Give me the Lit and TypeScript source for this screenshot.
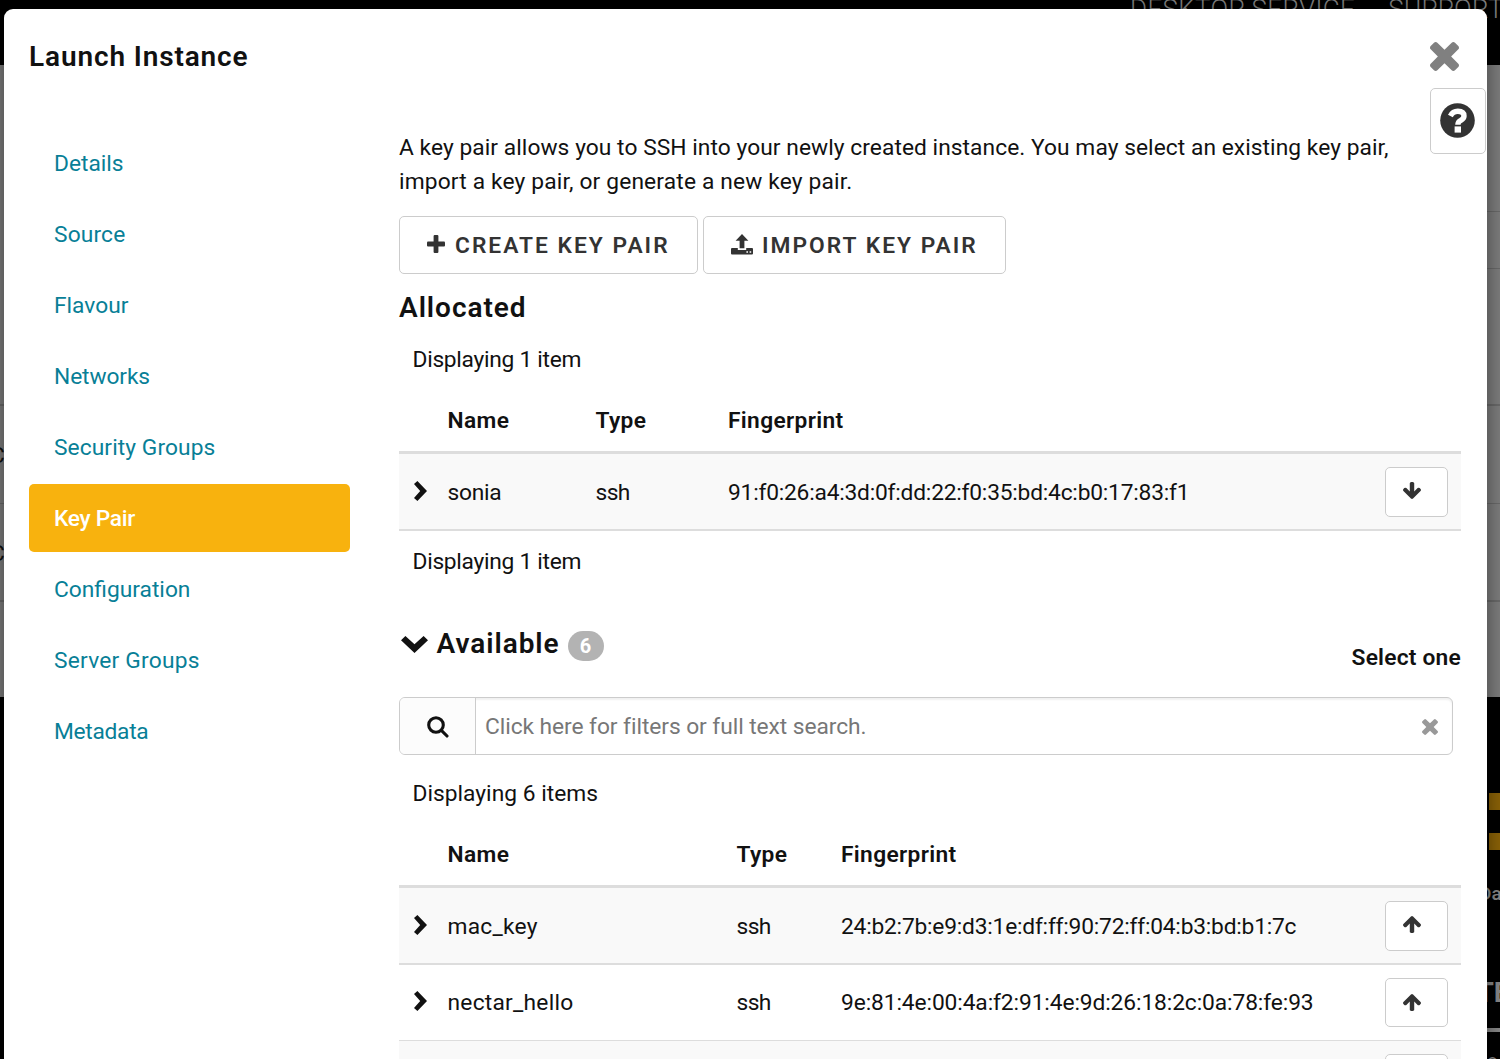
import { LitElement, html, svg, css, nothing } from "lit";
import { customElement, property } from "lit/decorators.js";
import { classMap } from "lit/directives/class-map.js";

const TIMES =
  "M1490 1322q0 40-28 68l-136 136q-28 28-68 28t-68-28l-294-294-294 294q-28 28-68 28t-68-28l-136-136q-28-28-28-68t28-68l294-294-294-294q-28-28-28-68t28-68l136-136q28-28 68-28t68 28l294 294 294-294q28-28 68-28t68 28l136 136q28 28 28 68t-28 68l-294 294 294 294q28 28 28 68z";
const ARROW =
  "M1675 971q0 51-37 90l-75 75q-38 38-91 38-54 0-90-38l-294-293v704q0 52-37.5 84.5t-90.5 32.5h-128q-53 0-90.5-32.5t-37.5-84.5v-704l-294 293q-36 38-90 38t-90-38l-75-75q-38-38-38-90 0-53 38-91l651-651q35-37 90-37 54 0 91 37l651 651q37 39 37 91z";

const ICONS: Record<string, { box: string; body: unknown }> = {
  times: { box: "302 366 1188 1188", body: svg`<path d=${TIMES} />` },
  up: { box: "117 192 1558 1472", body: svg`<path d=${ARROW} />` },
  down: {
    box: "117 192 1558 1472",
    body: svg`<path transform="rotate(180 896 928)" d=${ARROW} />`,
  },
  plus: {
    box: "0 0 18 18",
    body: svg`<rect x="0" y="6.6" width="18" height="4.8" rx="1" /><rect x="6.6" y="0" width="4.8" height="18" rx="1" />`,
  },
  upload: {
    box: "0 0 22 21",
    body: svg`<path d="M11 0l6.4 6.8h-4v7.4H8.6V6.8h-4z" /><path fill-rule="evenodd" d="M1 14h5.8v1.9h8.4V14H21q1 0 1 1v4.4q0 1-1 1H1q-1 0-1-1V15q0-1 1-1zM15.4 17.2v1.6H17v-1.6zM18.6 17.2v1.6h1.6v-1.6z" />`,
  },
  right: {
    box: "0 0 13 20",
    body: svg`<path d="M3.4 0L13 10 3.4 20 0 16.9 6.2 10 0 3.1z" />`,
  },
  chevron: {
    box: "0 0 27 17",
    body: svg`<path d="M0 4.2L4.4 0 13.5 8.2 22.6 0 27 4.2 13.5 17z" />`,
  },
  search: {
    box: "0 0 22 22",
    body: svg`<g fill="none" stroke="currentColor" stroke-width="3.1"><circle cx="9" cy="9" r="7.3" /><path stroke-linecap="round" d="M14.6 14.6L20 20" /></g>`,
  },
  help: {
    box: "0 0 35 35",
    body: svg`<circle cx="17.5" cy="17.5" r="17.3" /><path fill="none" stroke="#fff" stroke-width="5.4" d="M10.4 12.9Q12.8 8.2 17.8 8.2 24 8.2 24 13 24 15.6 20.8 17.4 17.9 18.9 17.9 21.8" /><path fill="#fff" d="M14.6 23.4h6.4v6.2h-6.4z" />`,
  },
};

@customElement("ui-icon")
class UiIcon extends LitElement {
  @property() name = "";
  static styles = css`
    :host { display: block; flex: none; }
    svg { display: block; width: 100%; height: 100%; fill: currentColor; }
  `;
  render() {
    const i = ICONS[this.name];
    return i
      ? html`<svg viewBox=${i.box} preserveAspectRatio="none" aria-hidden="true">${i.body}</svg>`
      : nothing;
  }
}

interface Key { name: string; type: string; fingerprint: string; }

@customElement("key-table")
class KeyTable extends LitElement {
  @property({ type: Array }) rows: Key[] = [];
  @property() direction = "up";
  @property() kind = "allocated";
  static styles = css`
    :host { display: block; }
    .line { display: grid; align-items: center; }
    .allocated .line { grid-template-columns: 48.5px 148px 132.5px 1fr 76px; }
    .available .line { grid-template-columns: 48.5px 289px 104.5px 1fr 76px; }
    .head { height: 60px; padding-top: 2px; border-bottom: 3px solid #ddd; font-weight: 600; letter-spacing: 0.35px; }
    .row { height: 75px; border-bottom: 1px solid #ddd; }
    .row.first { border-bottom-width: 2px; }
    .row.later { height: 74px; padding-bottom: 1px; }
    .odd { background: #f9f9f9; }
    .expander { width: 13px; height: 20px; margin: 0 0 2px 14.5px; color: #111; }
    .name, .type { padding-top: 2px; }
    .name { letter-spacing: 0.25px; }
    .tight .name { letter-spacing: -0.24px; }
    .type { letter-spacing: -0.6px; }
    .fp { padding-top: 2px; white-space: nowrap; letter-spacing: -0.21px; }
    .fp.wide { letter-spacing: -0.1px; }
    .move {
      box-sizing: border-box; width: 63px; height: 50px; padding: 0 9px 2px 0;
      border: 1px solid #ccc; border-radius: 5px; background: #fff; color: #333;
      display: flex; align-items: center; justify-content: center;
    }
    .later .move { height: 49px; align-self: start; margin-top: 13px; padding-bottom: 1px; }
    .arrow { width: 18px; height: 17px; }
  `;
  render() {
    return html`<div class=${this.kind}>
      <div class="line head"><span></span><span>Name</span><span>Type</span><span>Fingerprint</span><span></span></div>
      ${this.rows.map(
        (k, i) => html`<div class=${classMap({ line: true, row: true, first: i === 0, later: i > 0, odd: i % 2 === 0, tight: k.name.length < 6 })}>
          <ui-icon class="expander" name="right"></ui-icon>
          <span class="name">${k.name}</span>
          <span class="type">${k.type}</span>
          <span class=${classMap({ fp: true, wide: i === 1 })}>${k.fingerprint}</span>
          <span class="move"><ui-icon class="arrow" name=${this.direction}></ui-icon></span>
        </div>`
      )}
    </div>`;
  }
}

const STEPS = ["Details", "Source", "Flavour", "Networks", "Security Groups", "Key Pair", "Configuration", "Server Groups", "Metadata"];
const ALLOCATED: Key[] = [
  { name: "sonia", type: "ssh", fingerprint: "91:f0:26:a4:3d:0f:dd:22:f0:35:bd:4c:b0:17:83:f1" },
];
const AVAILABLE: Key[] = [
  { name: "mac_key", type: "ssh", fingerprint: "24:b2:7b:e9:d3:1e:df:ff:90:72:ff:04:b3:bd:b1:7c" },
  { name: "nectar_hello", type: "ssh", fingerprint: "9e:81:4e:00:4a:f2:91:4e:9d:26:18:2c:0a:78:fe:93" },
  { name: "", type: "", fingerprint: "" },
];

@customElement("app-root")
class AppRoot extends LitElement {
  static styles = css`
    :host {
      display: block; position: relative; width: 1500px; height: 1059px; overflow: hidden;
      background: #000; color: #111; font: 400 22.75px/34px Roboto, "Liberation Sans", sans-serif;
    }
    .page { display: flex; flex-direction: column; height: 100%; }
    .top {
      height: 65px; flex: none; display: flex; gap: 33px; padding-left: 1130px; box-sizing: border-box;
      color: #808080; font-size: 26px; line-height: 17px; font-weight: 300; letter-spacing: 0.35px; white-space: nowrap;
    }
    .top span { padding-top: 1px; }
    .body { flex: none; height: 632px; background: #7f7f7f; display: flex; flex-direction: column; }
    .band { box-sizing: border-box; border-bottom: 1px solid #6b6b6b; line-height: 99px; color: #111; text-indent: -10px; }
    .b1 { height: 147px; margin-left: 100px; }
    .b2 { height: 57px; margin-left: 100px; }
    .b3 { height: 137px; border-bottom-width: 2px; }
    .b4 { height: 98px; }
    .b5 { height: 98px; border-bottom-width: 2px; }
    .foot { flex: 1; box-sizing: border-box; padding: 96px 0 0 1489px; overflow: hidden; white-space: nowrap; color: #8a8a8a; }
    .bar { height: 17px; margin-bottom: 22.5px; background: #8c6307; }
    .small { font-size: 19px; line-height: 24px; margin: 32px 0 0 -10px; font-weight: 500; }
    .big { font-size: 28px; line-height: 34px; font-weight: 700; margin: 70px 0 0 -12.5px; }
    .rule { height: 4px; margin: 18px 0 0 -5px; background: #8a8a8a; }
    .tail { font-size: 19px; line-height: 20px; margin: 19px 0 0 -2px; }

    .modal {
      position: absolute; left: 4px; top: 9px; width: 1483px; height: 1100px; box-sizing: border-box;
      background: #fff; border-radius: 9px; box-shadow: 0 5px 22px rgba(0, 0, 0, 0.5);
    }
    .titlebar { display: flex; justify-content: space-between; height: 79px; padding: 0 28px 0 25px; }
    h1, h2 { margin: 0; font-weight: 600; font-size: 28px; }
    h1 { padding-top: 31px; letter-spacing: 0.87px; }
    .close { width: 29px; height: 29px; margin-top: 32.5px; color: #808080; }
    .help {
      position: absolute; left: 1426px; top: 79px; width: 56px; height: 66px; box-sizing: border-box;
      border: 1px solid #ccc; border-radius: 5px; background: #fff; color: #333;
      display: flex; justify-content: center; padding: 14px 1px 0 0;
    }
    .helpicon { width: 35px; height: 35px; }
    .content { display: flex; gap: 49px; padding: 32px 0 0 25px; }
    nav { width: 321px; flex: none; padding-top: 9px; display: flex; flex-direction: column; gap: 3px; }
    .step { height: 68px; line-height: 69px; padding-left: 25px; border-radius: 5px; color: #087f97; letter-spacing: 0; }
    .step.active { background: #f8b20e; color: #fff; font-weight: 500; letter-spacing: -0.3px; }
    .step.s1 { letter-spacing: 0.15px; }
    .step.s3 { letter-spacing: -0.1px; }
    .step.s8 { letter-spacing: -0.3px; }
    .step.s4 { letter-spacing: 0.08px; }
    .step.s7 { letter-spacing: 0.22px; }
    .main { width: 1062px; padding-top: 11px; }
    .intro { margin: 0; letter-spacing: 0.06px; }
    .intro span { display: block; white-space: nowrap; }
    .intro .l2 { letter-spacing: 0.16px; }
    .actions { display: flex; gap: 5px; margin-top: 17px; }
    .btn {
      box-sizing: border-box; width: 299px; height: 58px; border: 1px solid #ccc; border-radius: 5px;
      display: flex; align-items: center; padding: 1px 0 0 27px; gap: 10px;
      color: #333; font-weight: 600; letter-spacing: 2.02px; white-space: nowrap;
    }
    .btn.import { width: 303px; gap: 9px; }
    .plus { width: 18px; height: 18px; margin-bottom: 3px; }
    .upload { width: 22px; height: 21px; margin-bottom: 2px; }
    h2 { letter-spacing: 0.95px; }
    .h-alloc { margin-top: 17px; }
    .count { padding-left: 13.5px; letter-spacing: -0.28px; }
    .count.plural { letter-spacing: 0.02px; }
    .c1 { margin-top: 18px; }
    .t1 { margin-top: 12px; }
    .c2 { margin-top: 14px; }
    .avail { display: flex; margin-top: 48px; height: 70px; }
    .chev { width: 27px; height: 17px; margin: 9px 8.5px 0 2px; }
    .badge {
      width: 36px; height: 30px; margin: 4px 0 0 8px; border-radius: 15px; background: #b3b3b3; color: #fff;
      text-align: center; font-weight: 700; font-size: 20px; line-height: 30px;
    }
    .one { margin: 14px 0 0 auto; font-weight: 600; letter-spacing: 0.22px; }
    .search {
      box-sizing: border-box; width: 1054px; height: 58px; border: 1px solid #ccc; border-radius: 6px;
      display: flex; align-items: stretch; box-shadow: inset 0 2px 2px rgba(0, 0, 0, 0.06); overflow: hidden;
    }
    .lens { width: 75px; border-right: 1px solid #ccc; background: #fcfcfc; display: flex; align-items: center; justify-content: center; }
    .lensicon { width: 22px; height: 22px; margin-top: 1px; }
    .hint { flex: 1; padding-left: 9px; line-height: 57px; color: #777; letter-spacing: -0.06px; }
    .clear { width: 16px; height: 16px; margin: 20.5px 14px 0 0; color: #999; }
    .c3 { margin-top: 22px; }
    .t2 { margin-top: 12px; }
  `;
  render() {
    return html`
      <div class="page" aria-hidden="true">
        <div class="top"><span>DESKTOP SERVICE</span><span>SUPPORT</span></div>
        <div class="body">
          <div class="band b1"></div><div class="band b2"></div><div class="band b3"></div>
          <div class="band b4">C</div><div class="band b5">C</div>
        </div>
        <div class="foot">
          <div class="bar"></div><div class="bar"></div>
          <div class="small">Da</div><div class="big">TE</div><div class="rule"></div><div class="tail">o</div>
        </div>
      </div>
      <section class="modal">
        <header class="titlebar"><h1>Launch Instance</h1><ui-icon class="close" name="times"></ui-icon></header>
        <div class="help"><ui-icon class="helpicon" name="help"></ui-icon></div>
        <div class="content">
          <nav>
            ${STEPS.map((s, i) => html`<a class=${classMap({ step: true, active: s === "Key Pair", ["s" + i]: true })}>${s}</a>`)}
          </nav>
          <div class="main">
            <p class="intro">
              <span>A key pair allows you to SSH into your newly created instance. You may select an existing key pair,</span>
              <span class="l2">import a key pair, or generate a new key pair.</span>
            </p>
            <div class="actions">
              <div class="btn"><ui-icon class="plus" name="plus"></ui-icon>CREATE KEY PAIR</div>
              <div class="btn import"><ui-icon class="upload" name="upload"></ui-icon>IMPORT KEY PAIR</div>
            </div>
            <h2 class="h-alloc">Allocated</h2>
            <div class="count c1">Displaying 1 item</div>
            <key-table class="t1" kind="allocated" direction="down" .rows=${ALLOCATED}></key-table>
            <div class="count c2">Displaying 1 item</div>
            <div class="avail">
              <ui-icon class="chev" name="chevron"></ui-icon>
              <h2>Available</h2><span class="badge">6</span><span class="one">Select one</span>
            </div>
            <div class="search">
              <span class="lens"><ui-icon class="lensicon" name="search"></ui-icon></span>
              <span class="hint">Click here for filters or full text search.</span>
              <ui-icon class="clear" name="times"></ui-icon>
            </div>
            <div class="count plural c3">Displaying 6 items</div>
            <key-table class="t2" kind="available" direction="up" .rows=${AVAILABLE}></key-table>
          </div>
        </div>
      </section>`;
  }
}
